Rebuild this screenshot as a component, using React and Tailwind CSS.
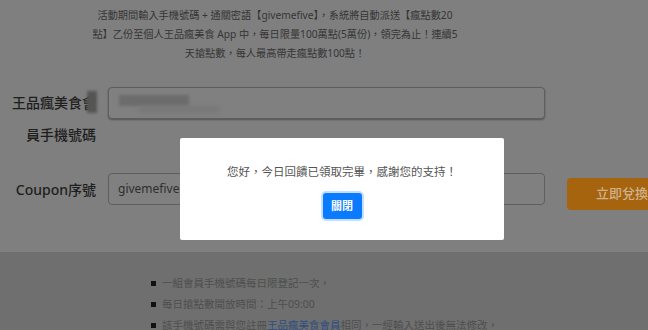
import React from "react"

const FONT = { fontFamily: '"Noto Sans", "Noto Sans CJK TC", sans-serif' }

const Rules = [
  { text: "一組會員手機號碼每日限登記一次，" },
  { text: "每日搶點數開放時間：上午09:00" },
  { pre: "該手機號碼需與您註冊", link: "王品瘋美食會員", post: "相同，一經輸入送出後無法修改，" },
]

const Modal = () => (
  <div className="absolute left-[180px] top-[138px] w-[324px] h-[102px] bg-white rounded-[2px] flex flex-col items-center pt-[25px]">
    <p className="text-[11.5px] leading-[18px] text-[#555]">您好，今日回饋已領取完畢，感謝您的支持！</p>
    <button className="mt-[12px] w-[39px] h-[26px] rounded-[3px] bg-[#0a7aff] text-white text-[11px] font-bold ring-2 ring-[#9cc8ff]/60">
      關閉
    </button>
  </div>
)

export default function App() {
  return (
    <div className="relative w-[648px] h-[330px] overflow-hidden bg-[#7f7f7f]" style={FONT}>
      {/* 上方說明 + 表單 */}
      <div className="h-[252px] bg-[#7f7f7f]">
        <p className="w-[550px] pt-[6px] text-center text-[10.2px] leading-[19px] text-[#353535]">
          活動期間輸入手機號碼 + 通關密語【givemefive】，系統將自動派送【瘋點數20
          <br />
          點】乙份至個人王品瘋美食 App 中，每日限量100萬點(5萬份)，領完為止！連續5
          <br />
          天搶點數，每人最高帶走瘋點數100點！
        </p>

        <div className="mt-[24px] flex">
          <div className="relative w-[96px] shrink-0 text-right text-[14px] leading-[32px] font-medium text-[#1e1e1e]">
            王品瘋美食會
            <br />
            員手機號碼
            <div className="absolute left-[87px] top-[4px] w-[10px] h-[22px] bg-[#555] blur-[1.5px]" />
          </div>
          <div className="relative ml-[12px] w-[437px] shrink-0 h-[32px] rounded-[4px] border border-[#5e5e5e] bg-[#808080] shadow-[0_1px_2px_rgba(0,0,0,0.35)]">
            <div className="absolute left-[10px] top-[7px] w-[70px] h-[11px] bg-[#6c6c6c] blur-[1.5px]" />
            <div className="absolute left-[30px] top-[18px] w-[80px] h-[7px] bg-[#787878] blur-[2px]" />
          </div>
        </div>

        <div className="mt-[22px] flex items-start">
          <div className="w-[96px] h-[32px] shrink-0 flex items-center justify-end text-[14px] font-medium text-[#1e1e1e]">
            Coupon序號
          </div>
          <div className="ml-[12px] w-[437px] h-[32px] shrink-0 rounded-[4px] border border-[#5e5e5e] bg-[#808080] flex items-center pl-[9px] text-[12px] text-[#2e2e2e]">
            givemefive
          </div>
          <button className="ml-[22px] mt-[5px] w-[100px] h-[32px] shrink-0 rounded-[4px] bg-[#a6640f] text-left pl-[29px] text-[13px] font-medium text-[#cfb28c]">
            立即兌換
          </button>
        </div>
      </div>

      {/* 下方注意事項 */}
      <div className="h-[78px] bg-[#6f6f6f] pt-[21px]">
        <ul className="pl-[151px]">
          {Rules.map((r, i) => (
            <li key={i} className="flex items-center h-[21px] text-[10.5px] text-[#4e4e4e]">
              <span className="w-[5px] h-[5px] bg-[#111] mr-[6px] shrink-0" />
              {r.text ? (
                r.text
              ) : (
                <span>
                  {r.pre}
                  <span className="text-[#2c4d7f]">{r.link}</span>
                  {r.post}
                </span>
              )}
            </li>
          ))}
        </ul>
      </div>

      <Modal />
    </div>
  )
}
